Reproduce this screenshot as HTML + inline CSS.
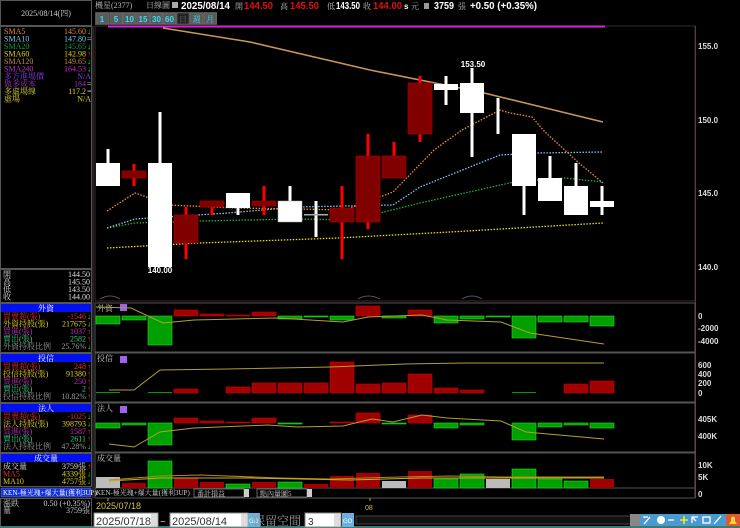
<!DOCTYPE html>
<html><head><meta charset="utf-8"><style>
html,body{margin:0;padding:0;background:#000;width:740px;height:528px;overflow:hidden}
svg{display:block}
text{font-family:"Liberation Sans","Noto Sans CJK TC",sans-serif;font-size:8px}
.c{font-family:"Liberation Serif","Noto Serif CJK SC","Noto Sans CJK TC",serif;font-size:8px}
.d{stroke-dasharray:1.5 1.5;fill:none;stroke-width:1.3}
.h{font-size:10px;font-weight:bold}
</style></head><body>
<svg width="740" height="528" viewBox="0 0 740 528" xmlns="http://www.w3.org/2000/svg">
<rect width="740" height="528" fill="#000"/>
<g fill="none" stroke="#555" stroke-width="1">
<rect x="0.5" y="0.5" width="91" height="25"/>
<rect x="0.5" y="26.5" width="91" height="242"/>
<rect x="0.5" y="269.5" width="91" height="33"/>
<rect x="0.5" y="303.5" width="91" height="49"/>
<rect x="0.5" y="353.5" width="91" height="49"/>
<rect x="0.5" y="403.5" width="91" height="49"/>
<rect x="0.5" y="453.5" width="91" height="33"/>
<rect x="0.5" y="498.5" width="91" height="28"/>
</g>
<text x="46" y="16" fill="#ccc" text-anchor="middle" class="c">2025/08/14(四)</text>
<g class="c">
<text x="4" y="34" fill="#e08a30" class="c">SMA5</text><text x="86" y="34" fill="#e08a30" text-anchor="end" class="c">145.60</text><text x="87" y="34" fill="#0f0" class="c">↓</text>
<text x="4" y="41.5" fill="#7cc8f0" class="c">SMA10</text><text x="86" y="41.5" fill="#7cc8f0" text-anchor="end" class="c">147.80</text><text x="87" y="41.5" fill="#ddd" class="c">=</text>
<text x="4" y="49" fill="#1c9a3a" class="c">SMA20</text><text x="86" y="49" fill="#1c9a3a" text-anchor="end" class="c">145.65</text><text x="87" y="49" fill="#0f0" class="c">↓</text>
<text x="4" y="56.5" fill="#e0d020" class="c">SMA60</text><text x="86" y="56.5" fill="#e0d020" text-anchor="end" class="c">142.98</text><text x="87" y="56.5" fill="#f22" class="c">↑</text>
<text x="4" y="64" fill="#c08a50" class="c">SMA120</text><text x="86" y="64" fill="#c08a50" text-anchor="end" class="c">149.65</text><text x="87" y="64" fill="#0f0" class="c">↓</text>
<text x="4" y="71.5" fill="#c030c0" class="c">SMA240</text><text x="86" y="71.5" fill="#c030c0" text-anchor="end" class="c">164.53</text><text x="87" y="71.5" fill="#0f0" class="c">↓</text>
<text x="4" y="79" fill="#8040e0" class="c">多方進場價</text><text x="91" y="79" fill="#8040e0" text-anchor="end" class="c">N/A</text>
<text x="4" y="86.5" fill="#a030c0" class="c">做多成本</text><text x="86" y="86.5" fill="#a030c0" text-anchor="end" class="c">184</text><text x="87" y="86.5" fill="#ddd" class="c">=</text>
<text x="4" y="94" fill="#d8d030" class="c">多虛場線</text><text x="86" y="94" fill="#d8d030" text-anchor="end" class="c">117.2</text><text x="87" y="94" fill="#ddd" class="c">=</text>
<text x="4" y="101.5" fill="#d8d030" class="c">虛場</text><text x="91" y="101.5" fill="#d8d030" text-anchor="end" class="c">N/A</text>
</g>
<g fill="#ddd">
<text x="3" y="277" class="c" fill="#ddd">開</text><text x="90" y="277" text-anchor="end" class="c" fill="#ddd">144.50</text>
<text x="3" y="284.5" class="c" fill="#ddd">高</text><text x="90" y="284.5" text-anchor="end" class="c" fill="#ddd">145.50</text>
<text x="3" y="292" class="c" fill="#ddd">低</text><text x="90" y="292" text-anchor="end" class="c" fill="#ddd">143.50</text>
<text x="3" y="299.5" class="c" fill="#ddd">收</text><text x="90" y="299.5" text-anchor="end" class="c" fill="#ddd">144.00</text>
</g>
<rect x="1" y="304" width="90" height="8" fill="#0010f0"/><text x="46" y="311" fill="#fff" text-anchor="middle" class="c">外資</text>
<rect x="1" y="354" width="90" height="8" fill="#0010f0"/><text x="46" y="361" fill="#fff" text-anchor="middle" class="c">投信</text>
<rect x="1" y="404" width="90" height="8" fill="#0010f0"/><text x="46" y="411" fill="#fff" text-anchor="middle" class="c">法人</text>
<rect x="1" y="454" width="90" height="8" fill="#0010f0"/><text x="46" y="461" fill="#fff" text-anchor="middle" class="c">成交量</text>
<g>
<text x="3" y="319" fill="#e03030" class="c">買賣超(張)</text><text x="86" y="319" fill="#e03030" text-anchor="end" class="c">-1546</text><text x="87" y="319" fill="#0f0" class="c">↓</text>
<text x="3" y="326.5" fill="#e0d020" class="c">外資持股(張)</text><text x="86" y="326.5" fill="#e0d020" text-anchor="end" class="c">217675</text><text x="87" y="326.5" fill="#0f0" class="c">↓</text>
<text x="3" y="334" fill="#c030c0" class="c">買進(張)</text><text x="86" y="334" fill="#c030c0" text-anchor="end" class="c">1037</text><text x="87" y="334" fill="#f22" class="c">↑</text>
<text x="3" y="341.5" fill="#30d080" class="c">賣出(張)</text><text x="86" y="341.5" fill="#30d080" text-anchor="end" class="c">2582</text><text x="87" y="341.5" fill="#f22" class="c">↑</text>
<text x="3" y="349" fill="#999" class="c">外資持股比例</text><text x="86" y="349" fill="#999" text-anchor="end" class="c">25.76%</text><text x="87" y="349" fill="#0f0" class="c">↓</text>
<text x="3" y="369" fill="#e03030" class="c">買賣超(張)</text><text x="86" y="369" fill="#e03030" text-anchor="end" class="c">248</text><text x="87" y="369" fill="#f22" class="c">↑</text>
<text x="3" y="376.5" fill="#e0d020" class="c">投信持股(張)</text><text x="86" y="376.5" fill="#e0d020" text-anchor="end" class="c">91380</text><text x="87" y="376.5" fill="#f22" class="c">↑</text>
<text x="3" y="384" fill="#c030c0" class="c">買進(張)</text><text x="86" y="384" fill="#c030c0" text-anchor="end" class="c">250</text><text x="87" y="384" fill="#f22" class="c">↑</text>
<text x="3" y="391.5" fill="#30d080" class="c">賣出(張)</text><text x="86" y="391.5" fill="#30d080" text-anchor="end" class="c">2</text><text x="87" y="391.5" fill="#f22" class="c">↑</text>
<text x="3" y="399" fill="#999" class="c">投信持股比例</text><text x="86" y="399" fill="#999" text-anchor="end" class="c">10.82%</text><text x="87" y="399" fill="#f22" class="c">↑</text>
<text x="3" y="419" fill="#e03030" class="c">買賣超(張)</text><text x="86" y="419" fill="#e03030" text-anchor="end" class="c">-1025</text><text x="87" y="419" fill="#0f0" class="c">↓</text>
<text x="3" y="426.5" fill="#e0d020" class="c">法人持股(張)</text><text x="86" y="426.5" fill="#e0d020" text-anchor="end" class="c">398793</text><text x="87" y="426.5" fill="#0f0" class="c">↓</text>
<text x="3" y="434" fill="#c030c0" class="c">買進(張)</text><text x="86" y="434" fill="#c030c0" text-anchor="end" class="c">1587</text><text x="87" y="434" fill="#f22" class="c">↑</text>
<text x="3" y="441.5" fill="#30d080" class="c">賣出(張)</text><text x="86" y="441.5" fill="#30d080" text-anchor="end" class="c">2611</text><text x="87" y="441.5" fill="#f22" class="c">↑</text>
<text x="3" y="449" fill="#999" class="c">法人持股比例</text><text x="86" y="449" fill="#999" text-anchor="end" class="c">47.28%</text><text x="87" y="449" fill="#0f0" class="c">↓</text>
<text x="3" y="469" fill="#ddd" class="c">成交量</text><text x="86" y="469" fill="#ddd" text-anchor="end" class="c">3759張</text><text x="87" y="469" fill="#f22" class="c">↑</text>
<text x="3" y="476.5" fill="#e03030" class="c">MA5</text><text x="86" y="476.5" fill="#e0d020" text-anchor="end" class="c">4339張</text><text x="87" y="476.5" fill="#0f0" class="c">↓</text>
<text x="3" y="484" fill="#e0d020" class="c">MA10</text><text x="86" y="484" fill="#e0d020" text-anchor="end" class="c">4757張</text><text x="87" y="484" fill="#0f0" class="c">↓</text>
</g>
<rect x="1" y="488" width="90" height="9" fill="#1030e0" stroke="#88a" stroke-width="0.5"/>
<text x="3" y="495" fill="#fff" class="c" style="font-size:7px">KEN-極光瑰+爆大量(獲利3UP)</text>
<text x="3" y="506" fill="#ccc" class="c">漲跌</text><text x="90" y="506" fill="#ccc" text-anchor="end" class="c">0.50 (+0.35%)</text>
<text x="3" y="513" fill="#ccc" class="c">量</text><text x="90" y="513" fill="#ccc" text-anchor="end" class="c">3759張</text>

<text x="95" y="8" fill="#bbb" class="c">機星(2377)</text>
<text x="146" y="8" fill="#bbb" class="c">日線圖</text>
<rect x="172" y="2" width="6" height="6" fill="#aaa"/>
<text x="181" y="9" fill="#fff" class="h" textLength="49" lengthAdjust="spacingAndGlyphs">2025/08/14</text>
<text x="235" y="9" fill="#bbb" class="c">開</text><text x="244" y="9" fill="#e01010" class="h" textLength="29" lengthAdjust="spacingAndGlyphs">144.50</text>
<text x="280" y="9" fill="#bbb" class="c">高</text><text x="290" y="9" fill="#e01010" class="h" textLength="29" lengthAdjust="spacingAndGlyphs">145.50</text>
<text x="327" y="9" fill="#bbb" class="c">低</text><text x="336" y="9" fill="#fff" class="h" textLength="24" lengthAdjust="spacingAndGlyphs">143.50</text>
<text x="363" y="9" fill="#bbb" class="c">收</text><text x="373" y="9" fill="#e01010" class="h" textLength="29" lengthAdjust="spacingAndGlyphs">144.00</text>
<text x="404" y="9" fill="#fff" style="font-size:8px;font-weight:bold">s</text><text x="411" y="9" fill="#bbb" class="c">元</text>
<rect x="424" y="3" width="5" height="6" fill="#999"/>
<text x="434" y="9" fill="#fff" class="h" textLength="20" lengthAdjust="spacingAndGlyphs">3759</text><text x="458" y="9" fill="#bbb" class="c">張</text>
<text x="470" y="9" fill="#fff" class="h" textLength="67" lengthAdjust="spacingAndGlyphs">+0.50 (+0.35%)</text>
<g>
<rect x="95" y="12" width="122" height="13" fill="#444"/>
<g fill="#5a5a5a" stroke="#777" stroke-width="0.5">
<rect x="96" y="13" width="12.5" height="11"/><rect x="110" y="13" width="12.5" height="11"/><rect x="123" y="13" width="13" height="11"/><rect x="137" y="13" width="12.5" height="11"/><rect x="150" y="13" width="12.5" height="11"/><rect x="163" y="13" width="13" height="11"/>
<rect x="177" y="13" width="12" height="11" fill="#222"/><rect x="190" y="13" width="13" height="11"/><rect x="204" y="13" width="12.5" height="11"/>
</g>
<g fill="#30e0f0" text-anchor="middle" style="font-size:8px;font-weight:bold">
<text x="102" y="22">1</text><text x="116" y="22">5</text><text x="129.5" y="22">10</text><text x="143" y="22">15</text><text x="156.5" y="22">30</text><text x="169.5" y="22">60</text>
</g>
<text x="183" y="22" fill="#666" text-anchor="middle" class="c">日</text>
<text x="196.5" y="22" fill="#30e0f0" text-anchor="middle" class="c">週</text><text x="210" y="22" fill="#30e0f0" text-anchor="middle" class="c">月</text>
</g>
<rect x="95" y="26" width="600" height="275" fill="none" stroke="#3a2a2a"/>
<line x1="695.5" y1="26" x2="695.5" y2="498" stroke="#5a3a3a"/>
<line x1="108" y1="26.5" x2="605" y2="26.5" stroke="#e020e0" stroke-width="2"/>
<line x1="93" y1="26" x2="93" y2="498" stroke="#444"/>
<g fill="#ddd" style="font-size:8px;font-weight:bold">
<text x="698" y="49">155.0</text><text x="698" y="123">150.0</text><text x="698" y="196">145.0</text><text x="698" y="270">140.0</text>
</g>
<polyline points="163,28 250,42 370,70 480,92 603,122" fill="none" stroke="#c8955a" stroke-width="1.6"/>
<polyline class="d" stroke="#e8e020" points="107,248 200,243 338,238 450,232 603,223"/>
<polyline class="d" stroke="#20b040" points="107,228 135,223 200,221 297,219 352,220 420,203 514,182 565,178 603,182"/>
<polyline class="d" stroke="#80c8f0" points="107,228 135,219 228,213 297,207 393,205 420,187 500,155 538,153 603,152"/>
<polyline class="d" stroke="#f09030" points="107,211 135,193 169,205 235,208 297,209 345,210 393,192 434,150 462,130 500,110 510,113 532,117 545,132 579,163 603,183"/>
<g fill="#fff">
<rect x="106.5" y="149" width="3" height="14"/><rect x="96" y="163" width="24" height="23"/>
<rect x="158.5" y="112" width="3" height="51"/><rect x="148" y="163" width="24" height="104"/>
<rect x="236.5" y="208" width="3" height="7"/><rect x="226" y="193" width="24" height="15"/>
<rect x="288.5" y="186" width="3" height="15"/><rect x="278" y="201" width="24" height="21" stroke="#aaa" stroke-width="0.5"/>
<rect x="314.5" y="201" width="3" height="36"/>
<rect x="444.5" y="76" width="3" height="29"/><rect x="434" y="84" width="24" height="6"/>
<rect x="470.5" y="68" width="3" height="89"/><rect x="460" y="83" width="24" height="30"/>
<rect x="496.5" y="98" width="3" height="36"/>
<rect x="522.5" y="186" width="3" height="29"/><rect x="512" y="134" width="24" height="52"/>
<rect x="548.5" y="156" width="3" height="22"/><rect x="538" y="178" width="24" height="23"/>
<rect x="574.5" y="163" width="3" height="23"/><rect x="564" y="186" width="24" height="29"/>
<rect x="600.5" y="186" width="3" height="29"/><rect x="590" y="201" width="24" height="6"/>
</g>
<rect x="304" y="214" width="24" height="1.5" fill="#aaa"/>
<g fill="#f00">
<rect x="132.5" y="164" width="3" height="22"/>
<rect x="184.5" y="207" width="3" height="52"/>
<rect x="210.5" y="201" width="3" height="14"/>
<rect x="262.5" y="186" width="3" height="29"/>
<rect x="340.5" y="186" width="3" height="73"/>
<rect x="366.5" y="134" width="3" height="95"/>
<rect x="392.5" y="142" width="3" height="14"/>
<rect x="418.5" y="76" width="3" height="66"/>
</g>
<g fill="#800000" stroke="#a00" stroke-width="0.7">
<rect x="122" y="171" width="24" height="7"/>
<rect x="174" y="215" width="24" height="28"/>
<rect x="200" y="201" width="24" height="6"/>
<rect x="252" y="201" width="24" height="5"/>
<rect x="330" y="208" width="24" height="14"/>
<rect x="356" y="156" width="24" height="66"/>
<rect x="382" y="156" width="24" height="22"/>
<rect x="408" y="83" width="24" height="51"/>
</g>
<g fill="#fff" text-anchor="middle" style="font-size:8px;font-weight:bold">
<text x="473" y="67">153.50</text><text x="160" y="273">140.00</text>
</g>
<path d="M100,299 Q110,293 120,299 M358,299 Q368,293 380,299 M462,299 Q472,293 482,299" stroke="#556" fill="none"/>
<g fill="none" stroke="#555">
<rect x="95" y="303" width="600" height="49"/>
<rect x="95" y="353" width="600" height="49"/>
<rect x="95" y="403" width="600" height="49"/>
<rect x="95" y="453" width="600" height="35"/>
<rect x="95" y="488" width="600" height="10"/>
</g>
<g class="c" fill="#ccc">
<text x="97" y="311" fill="#ccc" class="c">外資</text><text x="97" y="361" fill="#ccc" class="c">投信</text><text x="97" y="411" fill="#ccc" class="c">法人</text><text x="97" y="461" fill="#ccc" class="c">成交量</text>
</g>
<g fill="#a060f0"><rect x="120" y="304" width="7" height="7"/><rect x="120" y="356" width="7" height="7"/><rect x="120" y="406" width="7" height="7"/></g>
<g fill="#ddd" style="font-size:8px;font-weight:bold">
<text x="698" y="319">0</text><text x="698" y="331">-2000</text><text x="698" y="344">-4000</text>
<text x="698" y="368">600</text><text x="698" y="377">400</text><text x="698" y="386">200</text><text x="698" y="396">0</text>
<text x="698" y="422">405K</text><text x="698" y="439">400K</text>
<text x="698" y="468">10K</text><text x="698" y="480">5K</text><text x="698" y="497">0</text>
</g>
<g fill="#00a000" stroke="#20e020" stroke-width="0.6">
<rect x="96" y="316" width="24" height="8"/><rect x="122" y="316" width="24" height="4"/><rect x="148" y="316" width="24" height="29"/>
<rect x="278" y="316" width="24" height="3"/><rect x="304" y="316" width="24" height="1"/><rect x="330" y="316" width="24" height="4"/>
<rect x="382" y="316" width="24" height="2"/><rect x="434" y="316" width="24" height="7"/><rect x="460" y="316" width="24" height="3"/><rect x="486" y="316" width="24" height="1"/>
<rect x="512" y="316" width="24" height="22"/><rect x="538" y="316" width="24" height="6"/><rect x="564" y="316" width="24" height="6"/><rect x="590" y="316" width="24" height="10"/>
</g>
<g fill="#a00000" stroke="#c00" stroke-width="0.6">
<rect x="174" y="310" width="24" height="6"/><rect x="200" y="314" width="24" height="2"/><rect x="226" y="315" width="24" height="1"/><rect x="252" y="312" width="24" height="4"/>
<rect x="356" y="306" width="24" height="10"/><rect x="408" y="310" width="24" height="6"/>
</g>
<polyline fill="none" stroke="#b0a030" stroke-width="1" points="96,307 131,308 163,323 194,320 277,318 343,322 368,317 422,315 447,320 501,322 530,333 604,344"/>
<g fill="#00a000"><rect x="96" y="392" width="24" height="1"/><rect x="148" y="392" width="24" height="1"/><rect x="252" y="392" width="24" height="1"/><rect x="512" y="392" width="24" height="1"/></g>
<g fill="#a00000" stroke="#c00" stroke-width="0.6">
<rect x="174" y="389" width="24" height="4"/><rect x="226" y="387" width="24" height="6"/><rect x="252" y="383" width="24" height="10"/><rect x="278" y="383" width="24" height="10"/><rect x="304" y="383" width="24" height="10"/>
<rect x="330" y="362" width="24" height="31"/><rect x="356" y="384" width="24" height="9"/><rect x="382" y="383" width="24" height="10"/><rect x="408" y="374" width="24" height="19"/>
<rect x="434" y="388" width="24" height="5"/><rect x="460" y="390" width="24" height="3"/><rect x="564" y="384" width="24" height="9"/><rect x="590" y="381" width="24" height="12"/>
</g>
<polyline fill="none" stroke="#b0a030" stroke-width="1" points="109,390 134,390 160,370 227,369 331,367 405,364 464,363 604,363"/>
<g fill="#00a000" stroke="#20e020" stroke-width="0.6">
<rect x="96" y="423" width="24" height="5"/><rect x="122" y="423" width="24" height="2"/><rect x="148" y="423" width="24" height="22"/>
<rect x="278" y="423" width="24" height="1"/><rect x="382" y="423" width="24" height="1"/><rect x="434" y="423" width="24" height="5"/><rect x="460" y="423" width="24" height="2"/>
<rect x="512" y="423" width="24" height="17"/><rect x="538" y="423" width="24" height="4"/><rect x="564" y="423" width="24" height="2"/><rect x="590" y="423" width="24" height="5"/>
</g>
<g fill="#a00000" stroke="#c00" stroke-width="0.6">
<rect x="174" y="418" width="24" height="5"/><rect x="200" y="421" width="24" height="2"/><rect x="226" y="422" width="24" height="1"/><rect x="252" y="418" width="24" height="5"/>
<rect x="330" y="422" width="24" height="1"/><rect x="356" y="413" width="24" height="10"/><rect x="408" y="415" width="24" height="8"/>
</g>
<polyline fill="none" stroke="#b0a030" stroke-width="1" points="109,444 134,447 160,432 194,428 268,425 297,427 343,426 372,419 393,422 422,415 447,418 501,421 526,432 604,439"/>
<g stroke-width="0.6">
<rect x="96" y="477" width="24" height="11" fill="#bbb"/>
<rect x="122" y="483" width="24" height="5" fill="#a00000"/>
<rect x="148" y="461" width="24" height="27" fill="#00a000" stroke="#20e020"/>
<rect x="174" y="478" width="24" height="10" fill="#a00000"/>
<rect x="200" y="482" width="24" height="6" fill="#a00000"/>
<rect x="226" y="484" width="24" height="4" fill="#00a000" stroke="#20e020"/>
<rect x="252" y="482" width="24" height="6" fill="#a00000"/>
<rect x="278" y="482" width="24" height="6" fill="#00a000" stroke="#20e020"/>
<rect x="304" y="484" width="24" height="4" fill="#a00000"/>
<rect x="330" y="476" width="24" height="12" fill="#a00000"/>
<rect x="356" y="473" width="24" height="15" fill="#a00000"/>
<rect x="382" y="481" width="24" height="7" fill="#bbb"/>
<rect x="408" y="471" width="24" height="17" fill="#a00000"/>
<rect x="434" y="479" width="24" height="9" fill="#00a000" stroke="#20e020"/>
<rect x="460" y="474" width="24" height="14" fill="#00a000" stroke="#20e020"/>
<rect x="486" y="479" width="24" height="9" fill="#bbb"/>
<rect x="512" y="469" width="24" height="19" fill="#00a000" stroke="#20e020"/>
<rect x="538" y="479" width="24" height="9" fill="#00a000" stroke="#20e020"/>
<rect x="564" y="481" width="24" height="7" fill="#00a000" stroke="#20e020"/>
<rect x="590" y="479" width="24" height="9" fill="#a00000"/>
</g>
<polyline fill="none" stroke="#c08020" stroke-width="1" points="109,480 160,476 200,475 280,478 330,479 400,477 450,476 500,477 604,477"/>
<polyline fill="none" stroke="#c0b020" stroke-width="1" points="109,481 160,478 250,478 350,480 420,478 500,478 604,478"/>
<text x="96" y="495" fill="#ccc" class="c" style="font-size:7px">KEN-極光瑰+爆大量(獲利3UP)</text>
<rect x="194" y="489" width="50" height="8" fill="#000" stroke="#666"/><rect x="244" y="489" width="5" height="8" fill="#ccc"/>
<text x="197" y="496" fill="#ccc" class="c" style="font-size:7px">番計損益</text>
<rect x="257" y="489" width="50" height="8" fill="#000" stroke="#666"/><rect x="307" y="489" width="5" height="8" fill="#ccc"/>
<text x="260" y="496" fill="#ccc" class="c" style="font-size:7px">點內量圖5</text>
<line x1="108" y1="498" x2="108" y2="501" stroke="#aa4"/>
<text x="96" y="509" fill="#d0c040" style="font-size:9px">2025/07/18</text>
<line x1="370" y1="498" x2="370" y2="501" stroke="#aa4"/>
<text x="365" y="510" fill="#d0c040" style="font-size:7px">08</text>
<rect x="0" y="526" width="740" height="2" fill="#3a7a70"/>
<rect x="94" y="513" width="64" height="14" fill="#fff" stroke="#888"/>
<text x="96" y="525" fill="#333" style="font-size:11px">2025/07/18</text><rect x="151" y="514" width="6" height="12" fill="#ddd"/>
<text x="160" y="525" fill="#ccc" style="font-size:10px">~</text>
<rect x="170" y="513" width="78" height="14" fill="#fff" stroke="#888"/>
<text x="172" y="525" fill="#333" style="font-size:11px">2025/08/14</text><rect x="241" y="514" width="6" height="12" fill="#ddd"/>
<rect x="248" y="513" width="12" height="14" fill="#6ab0e0"/><text x="249" y="523" fill="#fff" style="font-size:6px">GO</text>
<text x="253" y="525" fill="#999" class="c" style="font-size:12px">保留空間</text>
<rect x="305" y="513" width="36" height="14" fill="#fff" stroke="#888"/><text x="308" y="525" fill="#333" style="font-size:10px">3</text><rect x="334" y="514" width="6" height="12" fill="#ddd"/>
<rect x="342" y="513" width="12" height="14" fill="#6ab0e0"/><text x="343" y="523" fill="#fff" style="font-size:6px">GO</text>
<rect x="356" y="516" width="282" height="8" fill="#111" stroke="#444"/>
<rect x="630" y="514" width="10" height="12" fill="#888"/>
<rect x="640" y="514" width="100" height="12" fill="#4a9ad0"/>
<g stroke="#fff" stroke-width="1.3" fill="none">
<path d="M644,524 L650,517 M644,518 L644,517 L648,517"/>
<circle cx="661" cy="520" r="4" fill="#fff" stroke="none"/>
<path d="M668,520 L674,520"/>
<path d="M680,520 L688,520 M684,516 L684,524" stroke="#ff0"/>
<path d="M692,523 L692,517 L698,517 M692,517 L696,521"/>
<rect x="703" y="517" width="7" height="6"/>
<path d="M714,524 L721,516"/>
</g>
<rect x="726" y="514" width="14" height="12" fill="#e05a30"/>
<path d="M729,524 L737,524 L735,521 L735,518 Q733,515 731,518 L731,521 Z" fill="#ffd040"/>
</svg>
</body></html>
